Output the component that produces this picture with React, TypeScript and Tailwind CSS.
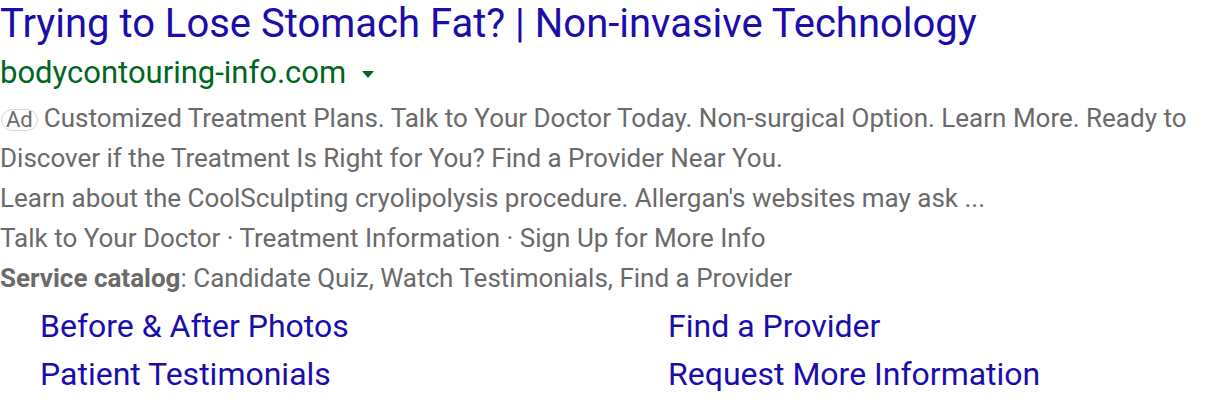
import React from "react";

const sitelinks = [
  ["Before & After Photos", "Find a Provider"],
  ["Patient Testimonials", "Request More Information"],
];

export default function App() {
  return (
    <div className="w-[1216px] h-[402px] bg-white overflow-hidden font-['Roboto',sans-serif]">
      <a className="block text-[40px] leading-[48px] text-[#1a0dab] whitespace-nowrap">
        Trying to Lose Stomach Fat? | Non-invasive Technology
      </a>
      <div className="flex items-center gap-[16px] h-[50px] text-[31px] text-[#006621]">
        <span>bodycontouring-info.com</span>
        <svg width="12" height="7" viewBox="0 0 12 7" className="mt-[3px]">
          <path d="M0 0h12L6 7z" fill="#006621" />
        </svg>
      </div>
      <div className="w-[1200px] text-[26px] leading-[40px] text-[#6a6a6a]">
        <p>
          <span className="inline-flex items-center justify-center h-[22px] px-[4px] ml-[1px] mr-[6px] border border-[#d6d6d6] rounded-[11px] text-[22px] leading-none">
            Ad
          </span>
          Customized Treatment Plans. Talk to Your Doctor Today. Non-surgical Option. Learn More. Ready to
          Discover if the Treatment Is Right for You? Find a Provider Near You.
        </p>
        <p>Learn about the CoolSculpting cryolipolysis procedure. Allergan's websites may ask ...</p>
        <p>Talk to Your Doctor · Treatment Information · Sign Up for More Info</p>
        <p>
          <span className="font-bold">Service catalog</span>: Candidate Quiz, Watch Testimonials, Find a
          Provider
        </p>
      </div>
      <div className="mt-[4px] pl-[40px] grid grid-cols-[628px_1fr] text-[32px] leading-[48px] text-[#1a0dab]">
        {sitelinks.flat().map((s) => (
          <a key={s} className="block whitespace-nowrap">
            {s}
          </a>
        ))}
      </div>
    </div>
  );
}
